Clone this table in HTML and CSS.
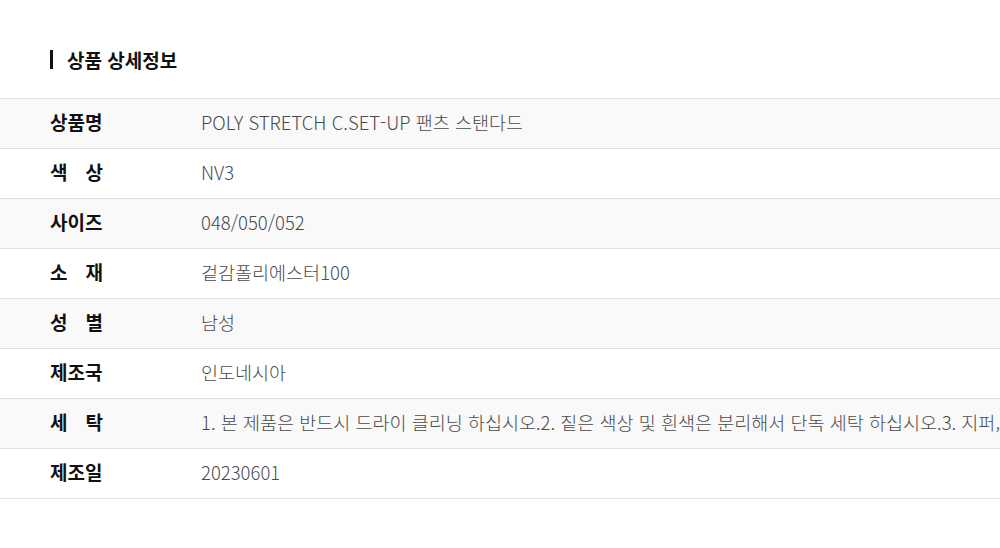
FILE: index.html
```html
<!DOCTYPE html>
<html lang="ko">
<head>
  <meta charset="UTF-8" />
  <title>상품 상세정보</title>
  <link rel="stylesheet" href="styles.css">
</head>
<body>
  <section class="detail">
    <h2 class="detail-title">상품 상세정보</h2>
    <table class="detail-table">
      <colgroup>
        <col class="col-label">
        <col>
      </colgroup>
      <tr>
        <th><span class="label">상품명</span></th>
        <td>POLY STRETCH C.SET-UP 팬츠 스탠다드</td>
      </tr>
      <tr>
        <th><span class="label">색 상</span></th>
        <td>NV3</td>
      </tr>
      <tr>
        <th><span class="label">사이즈</span></th>
        <td>048/050/052</td>
      </tr>
      <tr>
        <th><span class="label">소 재</span></th>
        <td>겉감폴리에스터100</td>
      </tr>
      <tr>
        <th><span class="label">성 별</span></th>
        <td>남성</td>
      </tr>
      <tr>
        <th><span class="label">제조국</span></th>
        <td>인도네시아</td>
      </tr>
      <tr>
        <th><span class="label">세 탁</span></th>
        <td>1. 본 제품은 반드시 드라이 클리닝 하십시오.2. 짙은 색상 및 흰색은 분리해서 단독 세탁 하십시오.3. 지퍼,단추 등 부자재는 잠근 후 세탁 하십시오.</td>
      </tr>
      <tr>
        <th><span class="label">제조일</span></th>
        <td>20230601</td>
      </tr>
    </table>
  </section>
</body>
</html>
```

FILE: styles.css
```css
* { box-sizing: border-box; }
body {
  margin: 0;
  padding: 0;
  background: #fff;
  font-family: "Noto Sans CJK KR", "Noto Sans", sans-serif;
  color: #111;
  overflow: hidden;
}
.detail {
  padding-top: 50px;
}
.detail-title {
  margin: 0 0 29px 50px;
  padding-left: 14px;
  border-left: 3px solid #111;
  font-size: 19px;
  font-weight: 700;
  line-height: 19px;
  height: 19px;
  display: flex;
  align-items: center;
}
.detail-table {
  border-collapse: collapse;
  table-layout: fixed;
  width: 1400px;
  border-top: 1px solid #e1e1e1;
}
.col-label {
  width: 201px;
}
.detail-table tr {
  height: 50px;
  border-bottom: 1px solid #e1e1e1;
}
.detail-table tr:nth-child(odd) {
  background: #f9f9f9;
}
.detail-table th {
  padding: 0 0 4px 50px;
  text-align: left;
  vertical-align: middle;
  font-size: 19px;
  font-weight: 700;
  color: #111;
}
.label {
  display: inline-block;
  width: 53px;
  text-align: justify;
  text-align-last: justify;
}
.detail-table td {
  padding: 0 0 4px;
  vertical-align: middle;
  white-space: nowrap;
  overflow: hidden;
  font-size: 18.5px;
  font-weight: 300;
  color: #4a4a4a;
}
```
